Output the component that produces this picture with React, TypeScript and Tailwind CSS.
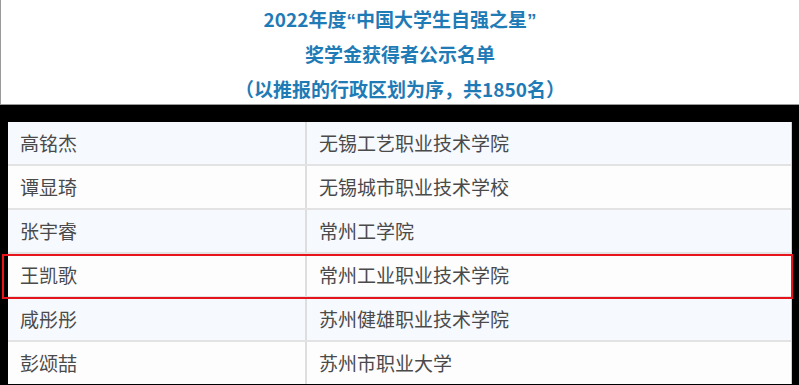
import React from "react";

const rows = [
  ["高铭杰", "无锡工艺职业技术学院"],
  ["谭显琦", "无锡城市职业技术学校"],
  ["张宇睿", "常州工学院"],
  ["王凯歌", "常州工业职业技术学院"],
  ["咸彤彤", "苏州健雄职业技术学院"],
  ["彭颂喆", "苏州市职业大学"],
];

export default function App() {
  return (
    <div
      className="w-[799px] h-[385px] overflow-hidden bg-black relative"
      style={{ fontFamily: '"Noto Sans CJK SC", "Noto Sans", sans-serif' }}
    >
      <div className="h-[105px] bg-white border-l border-b border-[#9a9a9a] flex flex-col items-center pt-[1px] text-[#1f7bb6] font-bold text-[19px]">
        <div className="h-[35px] leading-[35px]">
          2022年度<span className="font-['Liberation_Sans']">“</span>中国大学生自强之星<span className="font-['Liberation_Sans']">”</span>
        </div>
        <div className="h-[36px] leading-[36px]">奖学金获得者公示名单</div>
        <div className="h-[34px] leading-[34px]">（以推报的行政区划为序，共1850名）</div>
      </div>
      <div className="ml-[8px] mt-[17px] w-[784px] border-r border-[#cfcfcf] bg-white">
        {rows.map((r, i) => (
          <div
            key={i}
            className={`flex ${i === 0 ? "h-[42px]" : "h-[44px] border-t-2 border-[#e3e3e3]"} ${
              i % 2 === 0 ? "bg-[#f6f9fd]" : "bg-[#fdfdfd]"
            } text-[19px] text-[#4a4a4a]`}
          >
            <div className="w-[299px] pl-[12px] flex items-center border-r-2 border-[#dedede]">{r[0]}</div>
            <div className="flex-1 pl-[12px] flex items-center">{r[1]}</div>
          </div>
        ))}
      </div>
      <div className="absolute left-[2px] top-[254px] w-[791px] h-[45px] border-2 border-[#e8141b]" />
    </div>
  );
}
